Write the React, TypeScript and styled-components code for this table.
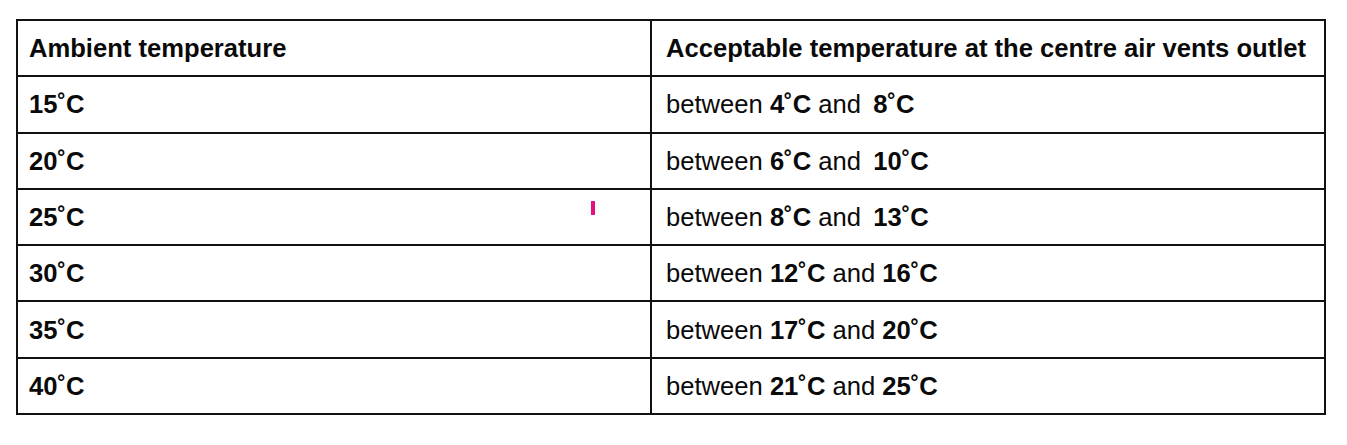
import React from "react";
import styled, { createGlobalStyle } from "styled-components";

const Global = createGlobalStyle`
  html, body {
    margin: 0;
    padding: 0;
    background: #ffffff;
  }
  body {
    font-family: "Liberation Sans", Arial, sans-serif;
    color: #0a0a0a;
  }
`;

const Page = styled.div`
  position: relative;
  width: 1347px;
  height: 445px;
  padding: 19px 0 0 16px;
  box-sizing: border-box;
`;

const Table = styled.table`
  border-collapse: collapse;
  width: 1308px;
  table-layout: fixed;
  font-size: 25.6px;
`;

const Col = styled.col<{ $w: number }>`
  width: ${(p) => p.$w}px;
`;

const Row = styled.tr`
  height: 56.3px;
`;

const Cell = styled.td<{ $pad: number; $head?: boolean }>`
  border: 2px solid #111;
  padding: 0 0 0 ${(p) => p.$pad}px;
  font-weight: ${(p) => (p.$head ? 700 : 400)};
  white-space: pre;
  vertical-align: middle;
  line-height: 28px;
`;

const B = styled.b`
  font-weight: 700;
`;

const Cursor = styled.span`
  position: absolute;
  left: 591px;
  top: 201px;
  width: 4px;
  height: 14px;
  background: #e2127c;
`;

const rows: { amb: string; lo: string; hi: string; gap: string }[] = [
  { amb: "15", lo: "4", hi: "8", gap: " \u2009" },
  { amb: "20", lo: "6", hi: "10", gap: " \u2009" },
  { amb: "25", lo: "8", hi: "13", gap: " \u2009" },
  { amb: "30", lo: "12", hi: "16", gap: " " },
  { amb: "35", lo: "17", hi: "20", gap: " " },
  { amb: "40", lo: "21", hi: "25", gap: " " },
];

const DEG = "\u02DA";

export default function App() {
  return (
    <>
      <Global />
      <Page>
        <Table>
          <colgroup>
            <Col $w={634} />
            <Col $w={674} />
          </colgroup>
          <tbody>
            <Row>
              <Cell $pad={11} $head>
                Ambient temperature
              </Cell>
              <Cell $pad={14} $head>
                Acceptable temperature at the centre air vents outlet
              </Cell>
            </Row>
            {rows.map((r) => (
              <Row key={r.amb}>
                <Cell $pad={11} $head>
                  {r.amb}
                  {DEG}C
                </Cell>
                <Cell $pad={14}>
                  {"between "}
                  <B>
                    {r.lo}
                    {DEG}C
                  </B>
                  {" and" + r.gap}
                  <B>
                    {r.hi}
                    {DEG}C
                  </B>
                </Cell>
              </Row>
            ))}
          </tbody>
        </Table>
        <Cursor />
      </Page>
    </>
  );
}
